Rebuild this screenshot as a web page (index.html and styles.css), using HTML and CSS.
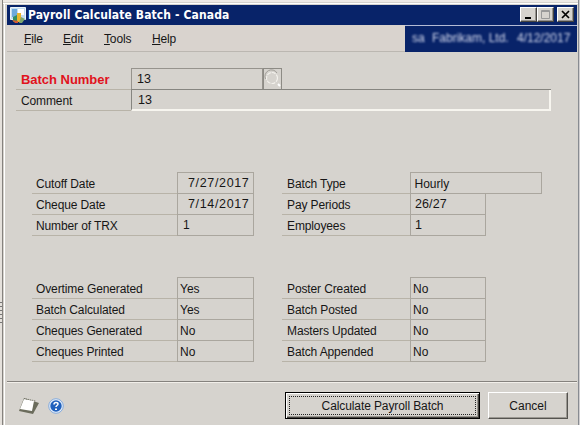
FILE: index.html
```html
<!DOCTYPE html>
<html lang="en">
<head>
<meta charset="utf-8">
<title>Payroll Calculate Batch - Canada</title>
<link rel="stylesheet" href="styles.css">
</head>
<body>
<main class="window">
  <div class="grip"></div>
  <header class="titlebar">
    <svg class="app-icon" width="18" height="18" viewBox="0 0 18 18"><path fill="#c3dcf0" stroke="#edf5f8" d="M1.500 1.500h15v12h-15z"/><path fill="#6da9dc" d="M3 3h5v8H3z"/><path fill="#fff" d="M9 3h6v6H9z"/><path fill="#328e61" d="M4 11l4-2v7H4z"/><path fill="#e8b52d" d="M8 7h4v9H8z"/><path fill="#d65b34" d="M3 14l3 3h3v-2z"/><path fill="#7da66e" d="M12 11l4 2-3 4h-3z"/></svg>
    <h1>Payroll Calculate Batch - Canada</h1>
    <div class="controls">
      <button class="control" aria-label="Minimize"><svg width="16" height="14"><path fill="#000" d="M4 9h6v2H4z"/></svg></button>
      <button class="control" aria-label="Maximize"><svg width="16" height="14"><path fill="none" stroke="#999" d="M3.500 2.500h8v8h-8zM3 3.500h9"/></svg></button>
      <button class="control close" aria-label="Close"><svg width="16" height="14"><path fill="none" stroke="#000" stroke-width="1.700" d="M4 3l7 7M11 3l-7 7"/></svg></button>
    </div>
  </header>
  <nav class="menubar">
    <a class="file"><u>F</u>ile</a><a class="edit"><u>E</u>dit</a><a class="tools"><u>T</u>ools</a><a class="help"><u>H</u>elp</a>
    <div class="session"><span class="user">sa</span><span class="company">Fabrikam, Ltd.</span><span class="date">4/12/2017</span></div>
  </nav>
  <section class="batch">
    <div class="row number"><label class="required">Batch Number</label><output>13</output><button class="lookup" aria-label="Lookup"><svg width="17" height="19"><circle cx="8" cy="9" r="5.500" fill="none" stroke="#f3f1ec" stroke-width="1.200" stroke-dasharray="4 1"/><path d="M1.500 10A6.500 6.500 0 0 1 13 4" fill="none" stroke="#a19e98"/><path d="M14 15l2 2" stroke="#fff" stroke-width="2"/></svg></button></div>
    <div class="row comment"><label>Comment</label><output>13</output></div>
  </section>
  <div class="groups details">
    <section class="group left">
      <div class="row"><label>Cutoff Date</label><output class="when">7/27/2017</output></div>
      <div class="row"><label>Cheque Date</label><output class="when">7/14/2017</output></div>
      <div class="row"><label>Number of TRX</label><output class="count">1</output></div>
    </section>
    <section class="group right">
      <div class="row wide"><label>Batch Type</label><output>Hourly</output></div>
      <div class="row"><label>Pay Periods</label><output class="periods">26/27</output></div>
      <div class="row"><label>Employees</label><output class="periods">1</output></div>
    </section>
  </div>
  <div class="groups statuses">
    <section class="group left">
      <div class="row"><label>Overtime Generated</label><output>Yes</output></div>
      <div class="row"><label>Batch Calculated</label><output>Yes</output></div>
      <div class="row"><label>Cheques Generated</label><output>No</output></div>
      <div class="row"><label>Cheques Printed</label><output>No</output></div>
    </section>
    <section class="group right">
      <div class="row"><label>Poster Created</label><output>No</output></div>
      <div class="row"><label>Batch Posted</label><output>No</output></div>
      <div class="row"><label>Masters Updated</label><output>No</output></div>
      <div class="row"><label>Batch Appended</label><output>No</output></div>
    </section>
  </div>
  <footer>
    <svg class="note" width="22" height="18" viewBox="0 0 22 18"><path fill="#6b6c5c" d="M6 1l15 5-6 11-14-3z"/><path fill="#fff" d="M6 2l10 2-2 10-12-2z"/><path fill="none" stroke="#77776b" stroke-dasharray="1 1" d="M6 1.500l12 2.500"/></svg>
    <svg class="info" width="16" height="16" viewBox="0 0 16 16"><circle cx="8" cy="8" r="7.300" fill="#e4eefb" stroke="#86abdb"/><circle cx="8" cy="8" r="5.700" fill="#2161bd"/><path fill="none" stroke="#fff" stroke-width="1.500" d="M6 6.500c0-3 4-2.500 4-.5 0 1.500-2 1.500-2 3"/><path fill="#fff" d="M7 10.500h2v1.500H7z"/></svg>
    <button class="calculate"><span>Calculate Payroll Batch</span></button>
    <button class="cancel">Cancel</button>
  </footer>
</main>
</body>
</html>
```
FILE: styles.css
```css
* { box-sizing: border-box; }
body { margin: 0; width: 580px; height: 425px; overflow: hidden; background: #d6d3ce; color: #161616; font: 12px "Liberation Sans", Arial, sans-serif; }
.window { position: relative; height: 425px; display: flex; flex-direction: column; padding: 5px 3px 0 7px; background: linear-gradient(90deg, #e5e1dc 2px, #85827e 2px 3px, #d6d3ce 3px 4px, #fff 4px 5px, #d6d3ce 5px 578px, #888b91 578px 579px, #d0ced0 579px); }
.window::before { content: ""; position: absolute; left: 3px; right: 2px; top: 0; height: 4px; background: linear-gradient(#eeeae6 2px, #d6d3ce 2px 3px, #fff 3px); }
.grip { position: absolute; left: 0; top: 302px; width: 2px; height: 24px; background: repeating-linear-gradient(#777 0 1px, #e5e1dc 1px 4px); }
button { padding: 0; border-radius: 0; background: #d6d3ce; color: #161616; font: inherit; }
.titlebar { display: flex; height: 20px; flex: none; background: #082369; color: #fff; }
.app-icon { margin: 1px 0 0 2px; }
h1 { margin: 2px 0 0 1px; font: bold 12px/16px "DejaVu Sans Condensed", "DejaVu Sans", sans-serif; font-stretch: condensed; letter-spacing: .12px; white-space: nowrap; }
.controls { display: flex; margin: 2px 3px 0 auto; }
.control { width: 17px; height: 15px; border: 1px solid; border-color: #fff #45433f #45433f #fff; display: flex; box-shadow: inset -1px -1px #96938f; }
.close { margin-left: 3px; }
.menubar { height: 27px; flex: none; display: flex; padding-left: 17px; line-height: 29px; border-bottom: 1px solid #bbb7b1; background: #d9d3ce; }
.menubar a { letter-spacing: -.15px; }
.file { width: 39px; }
.edit { width: 41px; }
.tools { width: 48px; }
.session { display: flex; width: 172px; height: 27px; margin-left: auto; padding-left: 7px; background: #082369; color: #d5daee; font-size: 12px; line-height: 25px; border-top: 1px solid #b4bbd5; }
.session span { filter: blur(1.1px); white-space: nowrap; }
.user { width: 20px; }
.company { width: 85px; }
.row { display: flex; height: 21px; }
label { white-space: nowrap; line-height: 23px; letter-spacing: -.12px; border-bottom: 1px solid #b8b3a8; }
output { line-height: 22px; border: 1px solid #aaa69e; border-width: 0 1px 1px; white-space: nowrap; }
.batch { margin: 16px 0 0 9px; height: 104px; flex: none; }
.batch label { width: 115px; padding-left: 5px; }
.batch output { font-size: 12.5px; line-height: 20px; }
.number { height: 22px; }
.number output { width: 132px; border-top-width: 1px; border-color: #96938d; padding-left: 5px; }
.batch .required { color: #e1121c; font-weight: bold; font-size: 13px; line-height: 24px; letter-spacing: -.03px; }
.lookup { width: 19px; border: 1px solid #8d8b85; height: 22px; }
.comment output { width: 420px; border-color: #868580 #f7f5ef #f7f5ef #868580; border-width: 0 2px 2px 1px; padding-left: 6px; box-shadow: 0 -1px #868580; }
.groups { display: grid; grid-template-columns: 222px 260px; column-gap: 28px; margin-left: 25px; flex: none; }
.details { height: 105px; }
.group label { padding-left: 4px; }
.group .row:first-child label { line-height: 24px; }
.left label { width: 145px; }
.left output { width: 77px; padding-left: 2px; }
.right label { width: 128px; }
.group.right label { padding-left: 5px; }
.right output { width: 76px; padding-left: 4px; }
.statuses .right output { padding-left: 2px; }
.group .row:first-child { height: 22px; }
.group .row:first-child output { border-top-width: 1px; }
.right .wide output { width: 133px; }
.left .when { padding-left: 10px; font-size: 12.5px; letter-spacing: .65px; line-height: 20px; }
.left .count { padding-left: 5px; line-height: 20px; }
.right .periods { font-size: 12.5px; letter-spacing: .1px; line-height: 21px; }
footer { display: flex; margin-top: 19px; height: 44px; flex: none; border-top: 1px solid #85827e; box-shadow: inset 0 1px #f2efea; }
.note { margin: 15px 0 0 11px; }
.info { margin: 16px 0 0 8px; }
.calculate { width: 195px; height: 27px; margin: 10px 8px 0 auto; border: 1px solid #000; padding: 3px; letter-spacing: -.1px; box-shadow: inset 1px 1px #fff, inset -1px -1px #44423f, inset -2px -2px #98958f; }
.calculate span { display: block; height: 19px; line-height: 18px; border: 1px dotted #222; }
.cancel { width: 80px; height: 27px; margin: 10px 9px 0 0; border: 1px solid; border-color: #fff #55534f #55534f #fff; box-shadow: inset -1px -1px #9b9892; }
```
